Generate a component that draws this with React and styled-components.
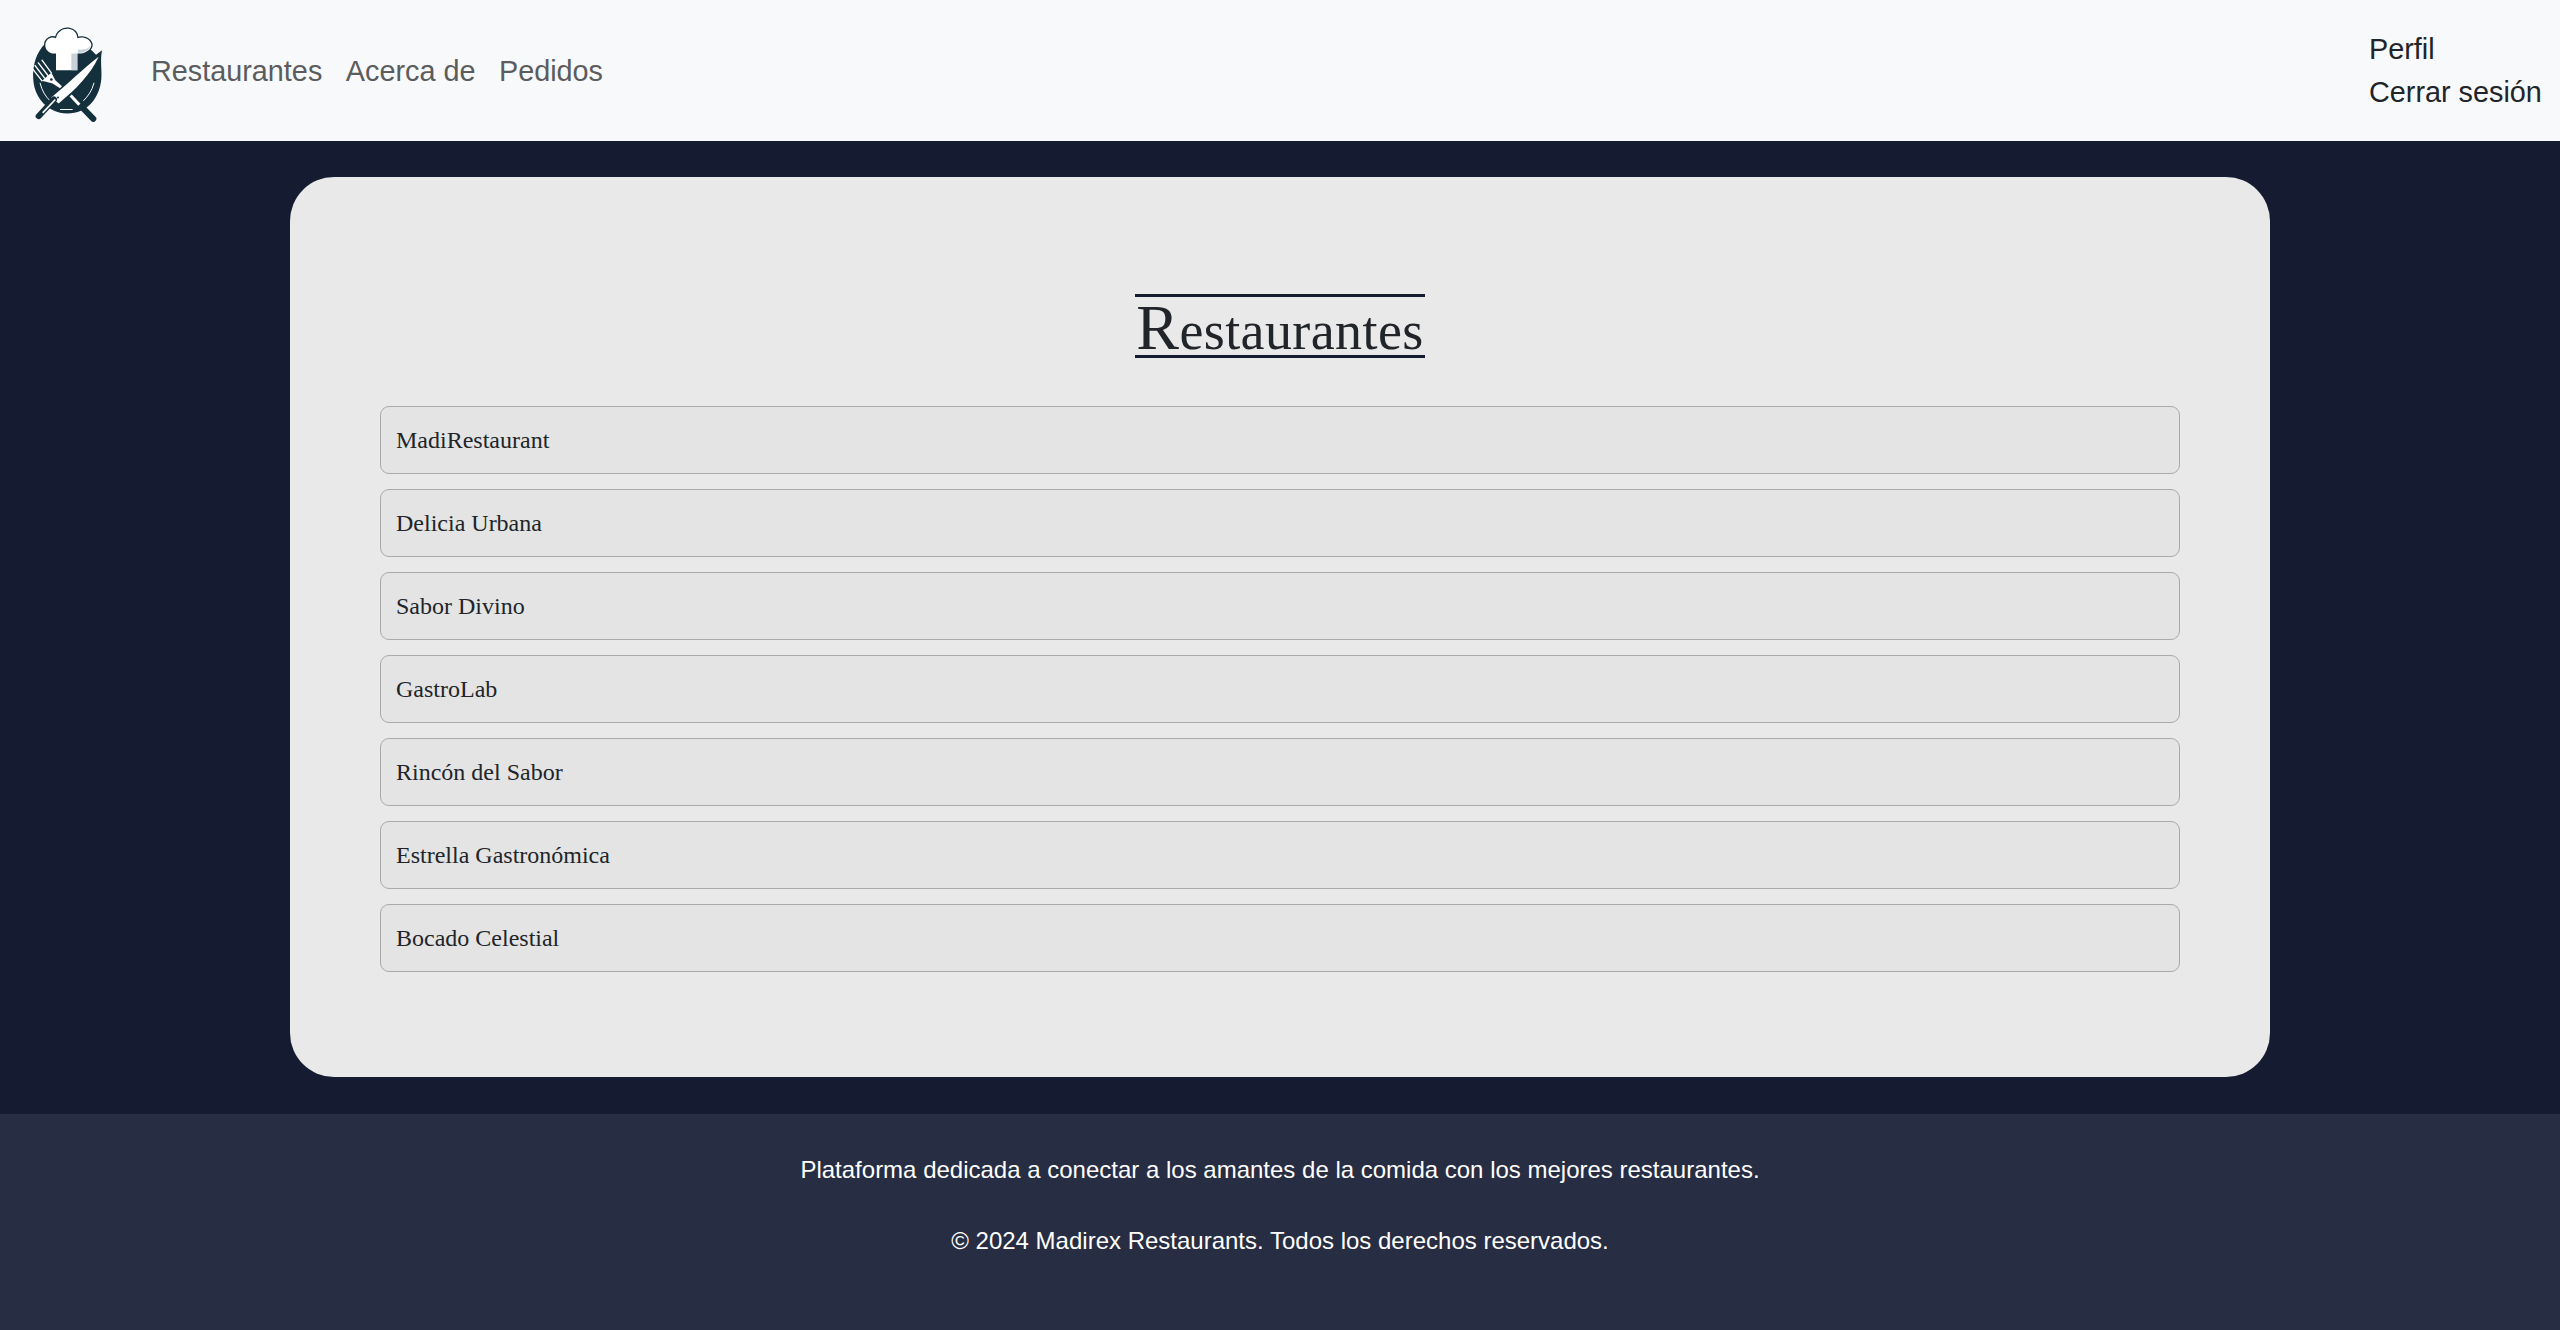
import React from 'react';
import styled, { createGlobalStyle } from 'styled-components';

const restaurants = [
    'MadiRestaurant',
    'Delicia Urbana',
    'Sabor Divino',
    'GastroLab',
    'Rincón del Sabor',
    'Estrella Gastronómica',
    'Bocado Celestial',
];

const GlobalStyle = createGlobalStyle`
    html, body {
        margin: 0;
        padding: 0;
        background: #151b30;
    }
    * {
        box-sizing: border-box;
    }
`;

const Page = styled.div`
    display: flex;
    flex-direction: column;
    min-height: 1330px;
    background: #151b30;
`;

const Header = styled.header`
    display: flex;
    align-items: center;
    justify-content: space-between;
    height: 141px;
    padding: 0 19px 0 30px;
    background: #f8f9fa;
`;

const LeftNav = styled.nav`
    display: flex;
    align-items: center;
`;

const Logo = styled.svg`
    display: block;
    width: 75px;
    height: 97px;
    margin: 6px 46px 0 0;
`;

const NavLinks = styled.div`
    display: flex;
    gap: 23.5px;
    padding-top: 2px;
`;

const NavLink = styled.a`
    font-family: "Liberation Sans", Arial, sans-serif;
    font-size: 28.8px;
    line-height: 43px;
    color: #5b5c5e;
`;

const UserLinks = styled.div`
    display: flex;
    flex-direction: column;
    width: 172px;
`;

const UserLink = styled.a`
    font-family: "Liberation Sans", Arial, sans-serif;
    font-size: 28.8px;
    line-height: 43px;
    white-space: nowrap;
    color: #212529;
`;

const Main = styled.main`
    flex: 1;
    display: flex;
    justify-content: center;
    padding: 36px 0 37px;
`;

const Card = styled.section`
    display: flex;
    flex-direction: column;
    align-items: center;
    width: 1980px;
    height: 900px;
    padding: 117px 90px 0;
    background: #e9e9e9;
    border-radius: 44px;
`;

const Title = styled.h1`
    width: 290px;
    height: 64px;
    margin: 0 0 48px;
    border-top: 3px solid #151b30;
    border-bottom: 3px solid #151b30;
    font-family: "Liberation Serif", "Times New Roman", serif;
    font-size: 54px;
    font-weight: 400;
    line-height: 62px;
    letter-spacing: 0.4px;
    text-align: center;
    white-space: nowrap;
    color: #212529;
    &::first-letter {
        font-size: 64px;
    }
`;

const List = styled.ul`
    display: flex;
    flex-direction: column;
    gap: 15px;
    width: 1800px;
    margin: 0;
    padding: 0;
    list-style: none;
`;

const Row = styled.li`
    display: flex;
    align-items: center;
    height: 68px;
    padding: 1px 15px 0;
    background: #e4e4e4;
    border: 1px solid #aaaaaa;
    border-radius: 9px;
    font-family: "Liberation Serif", "Times New Roman", serif;
    font-size: 24px;
    color: #212529;
`;

const Footer = styled.footer`
    display: flex;
    flex-direction: column;
    align-items: center;
    gap: 35px;
    height: 216px;
    padding-top: 38px;
    background: #272d42;
`;

const FooterText = styled.p`
    margin: 0;
    font-family: "Liberation Sans", Arial, sans-serif;
    font-size: 24px;
    line-height: 36px;
    color: #ffffff;
`;

const ChefLogo = () => (
    <Logo viewBox="60 45 225 290" aria-label="Madirex">
        {/* plate */}
        <path
            d="M106 100 C80 125 66 165 70 210 C74 262 112 308 172 310 C232 310 270 262 274 205 C276 180 270 150 276 120 L258 134 C240 112 215 96 180 94 C150 92 125 90 106 100 Z"
            fill="#15303d"
        />
        {/* plate highlights */}
        <path d="M90 218 C96 242 106 258 120 272" fill="none" stroke="#f8f9fa" strokeWidth="3" />
        <path d="M252 218 C246 242 234 258 220 272" fill="none" stroke="#f8f9fa" strokeWidth="3" />
        <path d="M150 298 H188" stroke="#f8f9fa" strokeWidth="3" />
        {/* chef hat with its dark outline */}
        <path
            d="M138 180 V130 C118 132 104 118 106 102 C108 86 124 78 138 84 C142 64 160 54 176 56 C192 58 202 70 202 84 C220 78 240 86 244 102 C246 118 224 132 202 130 V180 Z"
            fill="#ffffff"
            stroke="#15303d"
            strokeWidth="8"
            paintOrder="stroke"
        />
        <path d="M184 130 H202 V180 H184 Z" fill="#c9d2d9" />
        <path d="M204 128 C222 130 240 118 244 102 C240 114 224 120 204 118 Z" fill="#c9d2d9" />
        {/* fork */}
        <path
            d="M96 150 L124 188 M85 158 L114 196 M75 166 L104 204 M66 174 L96 212"
            stroke="#ffffff"
            strokeWidth="4"
            strokeLinecap="round"
        />
        <path d="M96 212 L124 188 L136 210 L156 228 L150 234 L128 220 Z" fill="#ffffff" />
        <circle cx="124" cy="208" r="4" fill="#15303d" />
        {/* right handle, behind the knife */}
        <path d="M184 258 L250 326" stroke="#15303d" strokeWidth="18" strokeLinecap="round" />
        <path d="M182 256 L208 284" stroke="#ffffff" strokeWidth="9" />
        {/* knife */}
        <path d="M266 140 C240 195 200 235 146 280 L124 262 C170 225 220 175 266 140 Z" fill="#ffffff" />
        <path d="M132 268 L86 318" stroke="#15303d" strokeWidth="18" strokeLinecap="round" />
        <path d="M136 268 L98 308" stroke="#ffffff" strokeWidth="5" />
        <circle cx="144" cy="262" r="3" fill="#15303d" />
    </Logo>
);

const App = () => (
    <Page>
        <GlobalStyle />
        <Header>
            <LeftNav>
                <ChefLogo />
                <NavLinks>
                    <NavLink>Restaurantes</NavLink>
                    <NavLink>Acerca de</NavLink>
                    <NavLink>Pedidos</NavLink>
                </NavLinks>
            </LeftNav>
            <UserLinks>
                <UserLink>Perfil</UserLink>
                <UserLink>Cerrar sesión</UserLink>
            </UserLinks>
        </Header>
        <Main>
            <Card>
                <Title>Restaurantes</Title>
                <List>
                    {restaurants.map((name) => (
                        <Row key={name}>{name}</Row>
                    ))}
                </List>
            </Card>
        </Main>
        <Footer>
            <FooterText>Plataforma dedicada a conectar a los amantes de la comida con los mejores restaurantes.</FooterText>
            <FooterText>© 2024 Madirex Restaurants. Todos los derechos reservados.</FooterText>
        </Footer>
    </Page>
);

export default App;
